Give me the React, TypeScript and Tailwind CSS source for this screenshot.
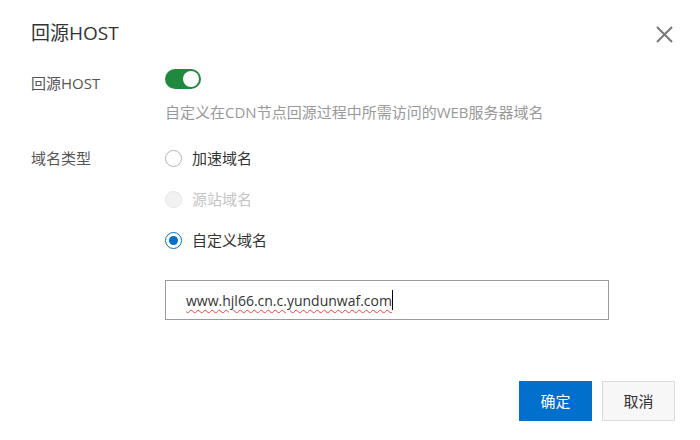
import React from 'react';

const font = { fontFamily: '"Segoe UI", "Open Sans", "Noto Sans CJK SC", sans-serif' };

const Radio = ({ label, checked, disabled }: { label: string; checked?: boolean; disabled?: boolean }) => (
  <label className="flex items-center h-[17px]">
    <span
      className={
        'w-[17px] h-[17px] rounded-full border flex items-center justify-center ' +
        (checked ? 'border-[#0070cc] bg-white' : disabled ? 'border-[#e5e5e5] bg-[#f2f2f2]' : 'border-[#b5b5b5] bg-white')
      }
    >
      {checked && <span className="w-[9px] h-[9px] rounded-full bg-[#0070cc]" />}
    </span>
    <span className={'ml-[10px] text-[15px] leading-[17px] ' + (disabled ? 'text-[#c4c4c4]' : 'text-[#333]')}>{label}</span>
  </label>
);

const App: React.FC = () => {
  return (
    <div className="w-[700px] h-[440px] bg-white relative flex flex-col" style={font}>
      <div className="flex items-start justify-between pl-[31px] pr-[26px] pt-[20px]">
        <h1 className="text-[19px] leading-[26px] text-[#333]">回源HOST</h1>
        <svg width="19" height="19" viewBox="0 0 19 19" className="mt-[5px]">
          <path d="M2 2 L17 17 M17 2 L2 17" stroke="#777" strokeWidth="2" />
        </svg>
      </div>

      <div className="flex pl-[31px] mt-[23px]">
        <div className="w-[134px] text-[15px] leading-[20px] text-[#555] pt-[4px]">回源HOST</div>
        <div className="flex flex-col">
          <div className="w-[36px] h-[20px] rounded-full bg-[#1f8a3e] flex items-center justify-end pr-[2px]">
            <span className="w-[16px] h-[16px] rounded-full bg-white" />
          </div>
          <p className="mt-[13px] text-[15px] leading-[20px] text-[#999]">自定义在CDN节点回源过程中所需访问的WEB服务器域名</p>
        </div>
      </div>

      <div className="flex pl-[31px] mt-[28px]">
        <div className="w-[134px] text-[15px] text-[#555] leading-[17px]">域名类型</div>
        <div className="flex flex-col gap-[24px]">
          <Radio label="加速域名" />
          <Radio label="源站域名" disabled />
          <Radio label="自定义域名" checked />
        </div>
      </div>

      <div className="ml-[165px] mt-[31px] w-[444px] h-[40px] border border-[#9a9a9a] flex items-center pl-[20px]">
        <span className="text-[14px] text-[#333] underline decoration-wavy decoration-[#f04040] decoration-1 underline-offset-[3px]">
          www.hjl66.cn.c.yundunwaf.com
        </span>
        <span className="w-px h-[20px] bg-black" />
      </div>

      <div className="flex justify-end gap-[10px] mt-auto mb-[19px] pr-[25px]">
        <button className="w-[73px] h-[40px] bg-[#0070cc] text-white text-[15px]">确定</button>
        <button className="w-[73px] h-[40px] bg-[#f7f7f7] border border-[#dcdcdc] text-[#333] text-[15px]">取消</button>
      </div>
    </div>
  );
};

export default App;
